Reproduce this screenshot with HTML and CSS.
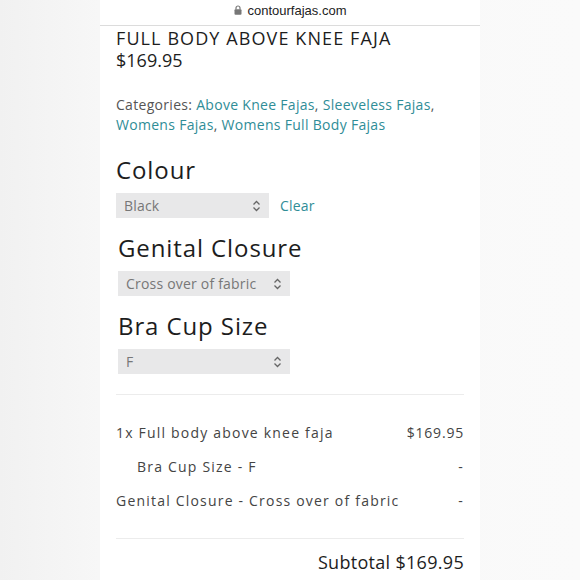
FILE: index.html
```html
<!DOCTYPE html>
<html>
<head>
<meta charset="utf-8">
<link rel="stylesheet" href="styles.css">
</head>
<body>
<div class="stage">
  <div class="phone">
    <div class="urlbar">
      <svg class="lock" width="8" height="10" viewBox="0 0 8 10"><path d="M2 4.5V3a2 2 0 0 1 4 0v1.5" fill="none" stroke="#777" stroke-width="1.2"/><rect x="0.5" y="4.3" width="7" height="5.4" rx="1" fill="#777"/></svg>
      <span class="url">contourfajas.com</span>
    </div>
    <div class="content">
      <h1 class="title">FULL BODY ABOVE KNEE FAJA</h1>
      <div class="price">$169.95</div>
      <p class="cats">Categories: <a class="link">Above Knee Fajas</a>, <a class="link">Sleeveless Fajas</a>, <a class="link">Womens Fajas</a>, <a class="link">Womens Full Body Fajas</a></p>

      <div class="opt">
        <h2 class="opt-label">Colour</h2>
        <div class="opt-row">
          <div class="select sel-colour"><span>Black</span><svg class="chev" width="9" height="12" viewBox="0 0 9 12"><path d="M1.5 4.5L4.5 1.5L7.5 4.5M1.5 7.5L4.5 10.5L7.5 7.5" fill="none" stroke="#666" stroke-width="1.3"/></svg></div>
          <a class="link clear">Clear</a>
        </div>
      </div>

      <div class="opt shifted">
        <h2 class="opt-label">Genital Closure</h2>
        <div class="opt-row">
          <div class="select sel-wide"><span>Cross over of fabric</span><svg class="chev" width="9" height="12" viewBox="0 0 9 12"><path d="M1.5 4.5L4.5 1.5L7.5 4.5M1.5 7.5L4.5 10.5L7.5 7.5" fill="none" stroke="#666" stroke-width="1.3"/></svg></div>
        </div>
      </div>

      <div class="opt shifted">
        <h2 class="opt-label">Bra Cup Size</h2>
        <div class="opt-row">
          <div class="select sel-wide"><span>F</span><svg class="chev" width="9" height="12" viewBox="0 0 9 12"><path d="M1.5 4.5L4.5 1.5L7.5 4.5M1.5 7.5L4.5 10.5L7.5 7.5" fill="none" stroke="#666" stroke-width="1.3"/></svg></div>
        </div>
      </div>

      <div class="summary">
        <div class="srow"><span>1x Full body above knee faja</span><span class="amt">$169.95</span></div>
        <div class="srow sub"><span>Bra Cup Size - F</span><span>-</span></div>
        <div class="srow"><span>Genital Closure - Cross over of fabric</span><span>-</span></div>
      </div>
      <div class="subtotal">Subtotal $169.95</div>
    </div>
  </div>
</div>
</body>
</html>
```
FILE: styles.css
```css
html, body {
  margin: 0;
  padding: 0;
}
body {
  width: 580px;
  height: 580px;
  overflow: hidden;
  background: linear-gradient(90deg, #f1f1f1 0%, #f7f7f7 17%, #fafafa 100%);
  font-family: "Open Sans", "Liberation Sans", sans-serif;
}
.stage {
  display: flex;
  justify-content: center;
  height: 580px;
}
.phone {
  width: 380px;
  height: 580px;
  background: #fff;
}
.urlbar {
  height: 25px;
  border-bottom: 1px solid #dcdcdc;
  display: flex;
  align-items: flex-start;
  justify-content: center;
  gap: 6px;
}
.lock {
  margin-top: 5px;
}
.url {
  font-family: "Liberation Sans", sans-serif;
  font-size: 13px;
  line-height: 21px;
  color: #222;
}
.content {
  padding: 0 16px;
}
.title {
  margin: 1px 0 0;
  font-size: 18px;
  font-weight: 400;
  line-height: 22px;
  color: #1d1d1d;
  letter-spacing: 1.1px;
}
.price {
  font-size: 18px;
  line-height: 22px;
  color: #1d1d1d;
}
.cats {
  margin: 24px 0 0;
  font-size: 14px;
  line-height: 20px;
  color: #555;
  letter-spacing: 0.3px;
}
.link {
  color: #2f8d97;
  text-decoration: none;
}
.opt {
  margin-top: 20px;
}
.opt.shifted {
  margin-top: 15px;
  padding-left: 2px;
}
.opt-label {
  margin: 0;
  font-size: 24px;
  font-weight: 400;
  line-height: 30px;
  color: #1d1d1d;
  letter-spacing: 0.9px;
}
.opt-row {
  margin-top: 8px;
  display: flex;
  align-items: center;
  gap: 11px;
}
.select {
  height: 25px;
  background: #e8e8e9;
  display: flex;
  align-items: center;
  justify-content: space-between;
  padding: 0 8px;
  box-sizing: border-box;
  font-size: 14px;
  color: #777;
  letter-spacing: 0.2px;
}
.sel-colour {
  width: 153px;
}
.sel-wide {
  width: 172px;
}
.clear {
  font-size: 14px;
  letter-spacing: 0.2px;
}
.summary {
  margin-top: 20px;
  border-top: 1px solid #ececec;
  border-bottom: 1px solid #ececec;
  padding: 21px 0 20px;
}
.srow {
  display: flex;
  justify-content: space-between;
  font-size: 14px;
  line-height: 34px;
  color: #444;
  letter-spacing: 1.2px;
}
.srow .amt {
  letter-spacing: 0.8px;
}
.srow.sub {
  padding-left: 21px;
}
.subtotal {
  margin-top: 11px;
  text-align: right;
  font-size: 18px;
  line-height: 24px;
  color: #1d1d1d;
  letter-spacing: 0.3px;
}
```
